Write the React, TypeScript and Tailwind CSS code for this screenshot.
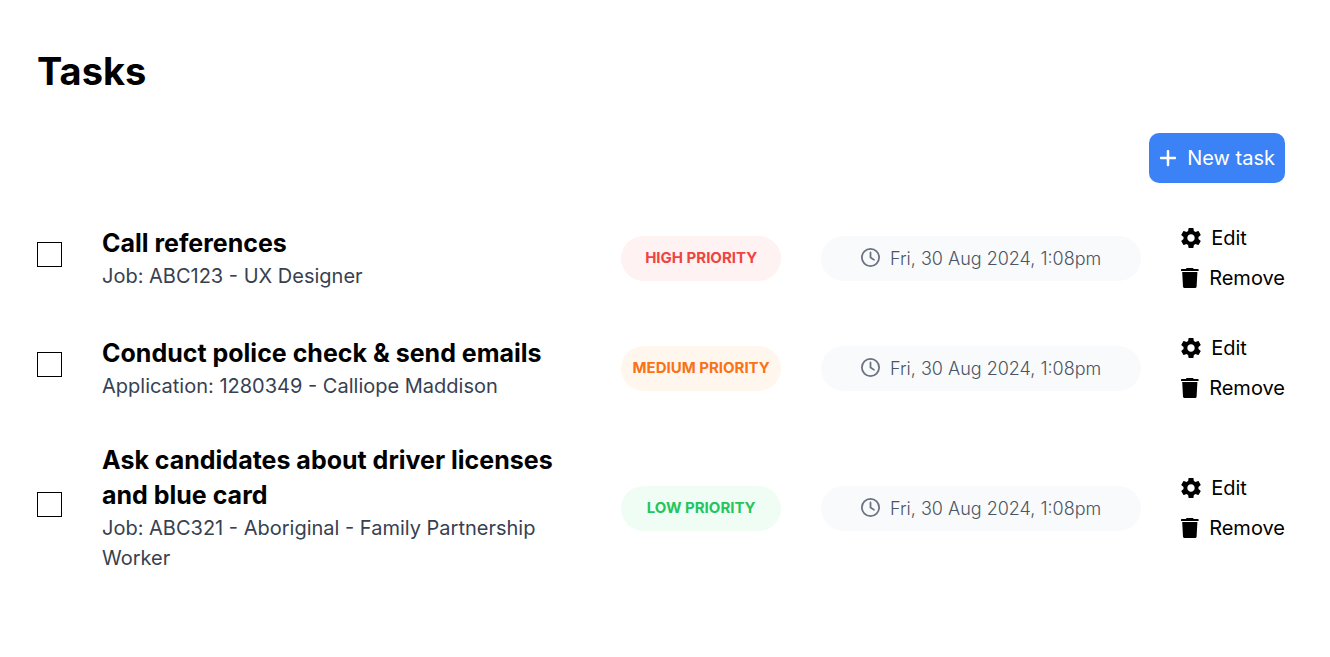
import React from "react";
import { FaPlus, FaRegClock } from "react-icons/fa6";

type Task = {
  id: string;
  title: string;
  detail: string;
  priority: "high" | "medium" | "low";
  due: string;
};

const tasks: Task[] = [
  { id: "t1", title: "Call references", detail: "Job: ABC123 - UX Designer", priority: "high", due: "Fri, 30 Aug 2024, 1:08pm" },
  { id: "t2", title: "Conduct police check & send emails", detail: "Application: 1280349 - Calliope Maddison", priority: "medium", due: "Fri, 30 Aug 2024, 1:08pm" },
  { id: "t3", title: "Ask candidates about driver licenses and blue card", detail: "Job: ABC321 - Aboriginal - Family Partnership Worker", priority: "low", due: "Fri, 30 Aug 2024, 1:08pm" },
];

const priorityStyles = {
  high: "bg-[#fef2f2] text-[#ef4444]",
  medium: "bg-[#fff7ed] text-[#f97316]",
  low: "bg-[#f0fdf4] text-[#22c55e]",
};

function GearIcon() {
  return (
    <svg viewBox="2 2 20 20" fill="currentColor" aria-hidden="true" className="size-5">
      <path d="M19.43 12.98c.04-.32.07-.64.07-.98s-.03-.66-.07-.98l2.11-1.65c.19-.15.24-.42.12-.64l-2-3.46c-.12-.22-.39-.3-.61-.22l-2.49 1c-.52-.4-1.08-.73-1.69-.98l-.38-2.65C14.46 2.18 14.25 2 14 2h-4c-.25 0-.46.18-.49.42l-.38 2.65c-.61.25-1.17.59-1.69.98l-2.49-1c-.23-.09-.49 0-.61.22l-2 3.46c-.13.22-.07.49.12.64l2.11 1.65c-.04.32-.07.65-.07.98s.03.66.07.98l-2.11 1.65c-.19.15-.24.42-.12.64l2 3.46c.12.22.39.3.61.22l2.49-1c.52.4 1.08.73 1.69.98l.38 2.65c.03.24.24.42.49.42h4c.25 0 .46-.18.49-.42l.38-2.65c.61-.25 1.17-.59 1.69-.98l2.49 1c.23.09.49 0 .61-.22l2-3.46c.12-.22.07-.49-.12-.64l-2.11-1.65zM12 15.7c-2.04 0-3.7-1.66-3.7-3.7s1.66-3.7 3.7-3.7 3.7 1.66 3.7 3.7-1.66 3.7-3.7 3.7z" />
    </svg>
  );
}

function TrashIcon() {
  return (
    <svg viewBox="0 0 18 20" fill="currentColor" aria-hidden="true" className="h-5 w-[18px]">
      <path d="M5.6 0h6.4l.7 1.1H17a.6.6 0 0 1 .6.6V3H0V1.7a.6.6 0 0 1 .6-.6h4.3z" />
      <path d="M1.2 4h15.2l-.8 14.8a1.2 1.2 0 0 1-1.2 1.1H3.2A1.2 1.2 0 0 1 2 18.8z" />
    </svg>
  );
}

function TaskRow({ task }: { task: Task }) {
  return (
    <li className="flex items-center gap-10">
      <input
        id={task.id}
        type="checkbox"
        className="mb-2 size-[25px] shrink-0 appearance-none border border-black bg-white checked:bg-black"
      />
      <label htmlFor={task.id} className="flex min-w-0 flex-1 flex-col">
        <span className="text-[25px] leading-[35px] font-bold">{task.title}</span>
        <span className="text-[20px] leading-[30px] text-[#374151]">{task.detail}</span>
      </label>
      <span className={`flex h-[45px] w-40 shrink-0 items-center justify-center rounded-full text-[15px] font-bold uppercase ${priorityStyles[task.priority]}`}>
        {task.priority} priority
      </span>
      <span className="flex h-[45px] w-80 shrink-0 items-center justify-center gap-2.5 rounded-full bg-[#f9fafb] text-[18px] font-light text-[#4b5563]">
        <FaRegClock className="mb-0.5 size-[19px] text-[#6b7280]" />
        <time>{task.due}</time>
      </span>
      <div className="flex shrink-0 flex-col items-start gap-2.5 text-[20px] leading-[30px]">
        <button type="button" className="flex items-center gap-2.5">
          <GearIcon />
          Edit
        </button>
        <button type="button" className="flex items-center gap-2.5">
          <TrashIcon />
          Remove
        </button>
      </div>
    </li>
  );
}

export default function App() {
  return (
    <main className="min-h-screen bg-white px-[37px] pt-[45px] pr-[45px] font-[Inter,sans-serif] text-black">
      <h1 className="text-[38px] leading-[52px] font-bold">Tasks</h1>
      <div className="mt-9 flex justify-end">
        <button type="button" className="flex h-[50px] items-center gap-2.5 rounded-[10px] bg-[#3b82f6] px-2.5 text-[20px] text-white">
          <FaPlus className="h-5 w-[18px]" />
          New task
        </button>
      </div>
      <ul className="mt-10 flex flex-col gap-10">
        {tasks.map((task) => (
          <TaskRow key={task.id} task={task} />
        ))}
      </ul>
    </main>
  );
}
